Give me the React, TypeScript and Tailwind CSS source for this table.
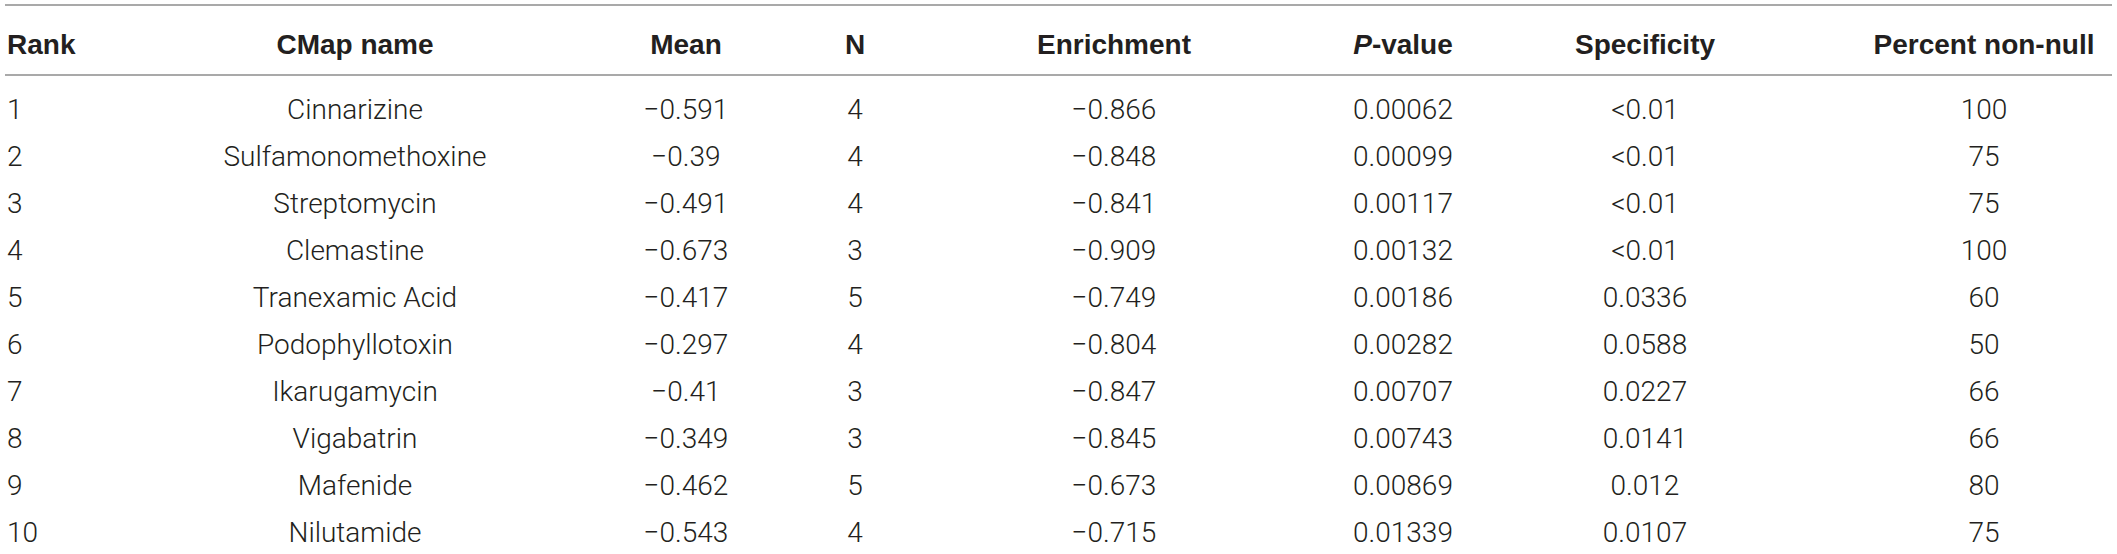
import React from 'react';

type Row = {
  rank: number;
  name: string;
  mean: string;
  n: number;
  enrichment: string;
  pValue: string;
  specificity: string;
  percent: number;
};

const rows: Row[] = [
  { rank: 1, name: 'Cinnarizine', mean: '−0.591', n: 4, enrichment: '−0.866', pValue: '0.00062', specificity: '<0.01', percent: 100 },
  { rank: 2, name: 'Sulfamonomethoxine', mean: '−0.39', n: 4, enrichment: '−0.848', pValue: '0.00099', specificity: '<0.01', percent: 75 },
  { rank: 3, name: 'Streptomycin', mean: '−0.491', n: 4, enrichment: '−0.841', pValue: '0.00117', specificity: '<0.01', percent: 75 },
  { rank: 4, name: 'Clemastine', mean: '−0.673', n: 3, enrichment: '−0.909', pValue: '0.00132', specificity: '<0.01', percent: 100 },
  { rank: 5, name: 'Tranexamic Acid', mean: '−0.417', n: 5, enrichment: '−0.749', pValue: '0.00186', specificity: '0.0336', percent: 60 },
  { rank: 6, name: 'Podophyllotoxin', mean: '−0.297', n: 4, enrichment: '−0.804', pValue: '0.00282', specificity: '0.0588', percent: 50 },
  { rank: 7, name: 'Ikarugamycin', mean: '−0.41', n: 3, enrichment: '−0.847', pValue: '0.00707', specificity: '0.0227', percent: 66 },
  { rank: 8, name: 'Vigabatrin', mean: '−0.349', n: 3, enrichment: '−0.845', pValue: '0.00743', specificity: '0.0141', percent: 66 },
  { rank: 9, name: 'Mafenide', mean: '−0.462', n: 5, enrichment: '−0.673', pValue: '0.00869', specificity: '0.012', percent: 80 },
  { rank: 10, name: 'Nilutamide', mean: '−0.543', n: 4, enrichment: '−0.715', pValue: '0.01339', specificity: '0.0107', percent: 75 },
];

// column widths tuned so centers line up with the scan
const cols = 'grid grid-cols-[155px_390px_272px_66px_452px_126px_358px_1fr] items-center';

export default function App() {
  return (
    <div className="w-[2117px] h-[554px] bg-white overflow-hidden pt-[4px] px-[5px]">
      <div className="border-t-2 border-[#a9a9a9]">
        <div
          className={`${cols} h-[70px] pt-[9px] border-b-2 border-[#a9a9a9] text-[28px] font-bold text-[#231f20]`}
          style={{ fontFamily: '"Liberation Sans", Arial, sans-serif' }}
        >
          <div className="pl-[2px]">Rank</div>
          <div className="text-center">CMap name</div>
          <div className="text-center">Mean</div>
          <div className="text-center">N</div>
          <div className="text-center">Enrichment</div>
          <div className="text-center">
            <i>P</i>-value
          </div>
          <div className="text-center">Specificity</div>
          <div className="text-center pl-[32px]">Percent non-null</div>
        </div>

        <div
          className="pt-[10px] text-[28px] font-light text-[#231f20]"
          style={{ fontFamily: 'Roboto, "Liberation Sans", sans-serif' }}
        >
          {rows.map((r) => (
            <div key={r.rank} className={`${cols} h-[47px]`}>
              <div className="pl-[2px]">{r.rank}</div>
              <div className="text-center">{r.name}</div>
              <div className="text-center">{r.mean}</div>
              <div className="text-center">{r.n}</div>
              <div className="text-center">{r.enrichment}</div>
              <div className="text-center">{r.pValue}</div>
              <div className="text-center">{r.specificity}</div>
              <div className="text-center pl-[32px]">{r.percent}</div>
            </div>
          ))}
        </div>
      </div>
    </div>
  );
}
